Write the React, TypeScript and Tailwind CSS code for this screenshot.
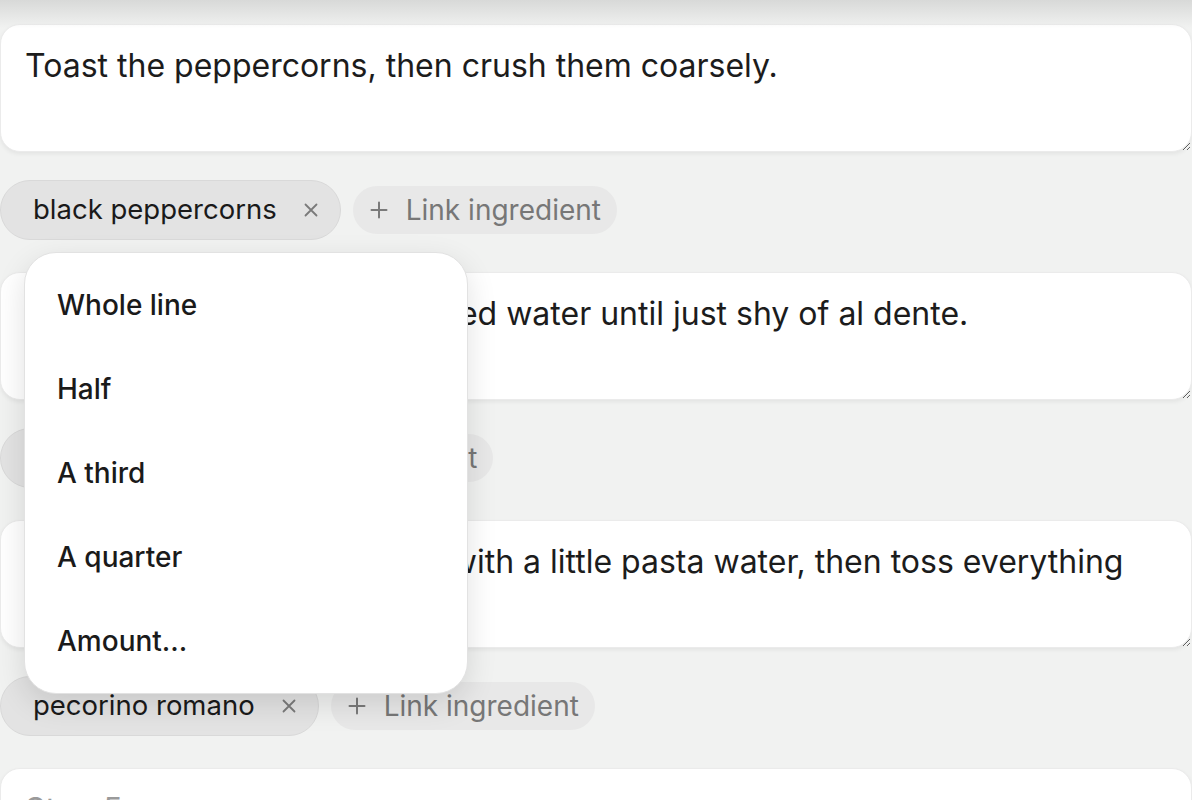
import React from "react";

type Step = { text: string; chip: string };

const steps: Step[] = [
  { text: "Toast the peppercorns, then crush them coarsely.", chip: "black peppercorns" },
  { text: "Boil the spaghetti in well-salted water until just shy of al dente.", chip: "spaghetti" },
  {
    text: "Stir the cheese and pepper, with a little pasta water, then toss everything together off the heat.",
    chip: "pecorino romano",
  },
];

function XIcon() {
  return (
    <svg width="16" height="16" viewBox="0 0 16 16" className="shrink-0">
      <path d="M2.5 2.5 L13.5 13.5 M13.5 2.5 L2.5 13.5" stroke="#7a7a7a" strokeWidth="1.8" strokeLinecap="round" />
    </svg>
  );
}

function PlusIcon() {
  return (
    <svg width="18" height="18" viewBox="0 0 18 18" className="shrink-0">
      <path d="M9 1.5 V16.5 M1.5 9 H16.5" stroke="#7a7a7a" strokeWidth="2" strokeLinecap="round" />
    </svg>
  );
}

function ChipRow({ chip }: { chip: string }) {
  return (
    <div className="mt-[28px] flex h-[60px] items-center gap-[12px]">
      <div className="flex h-[60px] items-center gap-[26px] rounded-full border border-[#d9d9d9] bg-[#e3e3e3] pl-[32px] pr-[21px] text-[27.5px] text-[#1a1a1a]">
        <span>{chip}</span>
        <XIcon />
      </div>
      <div className="flex h-[48px] items-center gap-[18px] rounded-full bg-[#e8e8e8] pl-[17px] pr-[16px] text-[28px] text-[#777777]">
        <PlusIcon />
        <span>Link ingredient</span>
      </div>
    </div>
  );
}

const areaCls =
  "block h-[128px] w-full resize-y rounded-[20px] border border-[#ebebeb] bg-white px-[24px] pt-[19px] pb-[10px] text-[32px] leading-[44px] text-[#1c1c1c] placeholder:text-[#9a9a9a] shadow-[0_2px_4px_rgba(0,0,0,0.06)] outline-none";

export default function App() {
  const items = ["Whole line", "Half", "A third", "A quarter", "Amount..."];
  return (
    <div
      className="relative h-[800px] w-[1192px] overflow-hidden bg-[#f1f2f1] pt-[24px]"
      style={{ fontFamily: "Inter, 'Noto Sans', sans-serif" }}
    >
      <div className="pointer-events-none absolute left-0 right-0 top-0 z-10 h-[28px] bg-gradient-to-b from-[#d8d9d8] to-[#f1f2f1]/0" />
      <div className="flex flex-col gap-[32px]">
        {steps.map((s, i) => (
          <div key={i}>
            <textarea defaultValue={s.text} className={areaCls} />
            <ChipRow chip={s.chip} />
          </div>
        ))}
        <textarea placeholder="Step 5" className={areaCls} />
      </div>

      <div className="absolute left-[24px] top-[252px] z-20 w-[444px] rounded-[32px] border border-[#e2e2e2] bg-white py-[10px] shadow-[0_10px_30px_rgba(0,0,0,0.12)]">
        {items.map((it) => (
          <div key={it} className="flex h-[84px] items-center px-[32px] text-[28px] font-medium text-[#1a1a1a]">
            {it}
          </div>
        ))}
      </div>
    </div>
  );
}
